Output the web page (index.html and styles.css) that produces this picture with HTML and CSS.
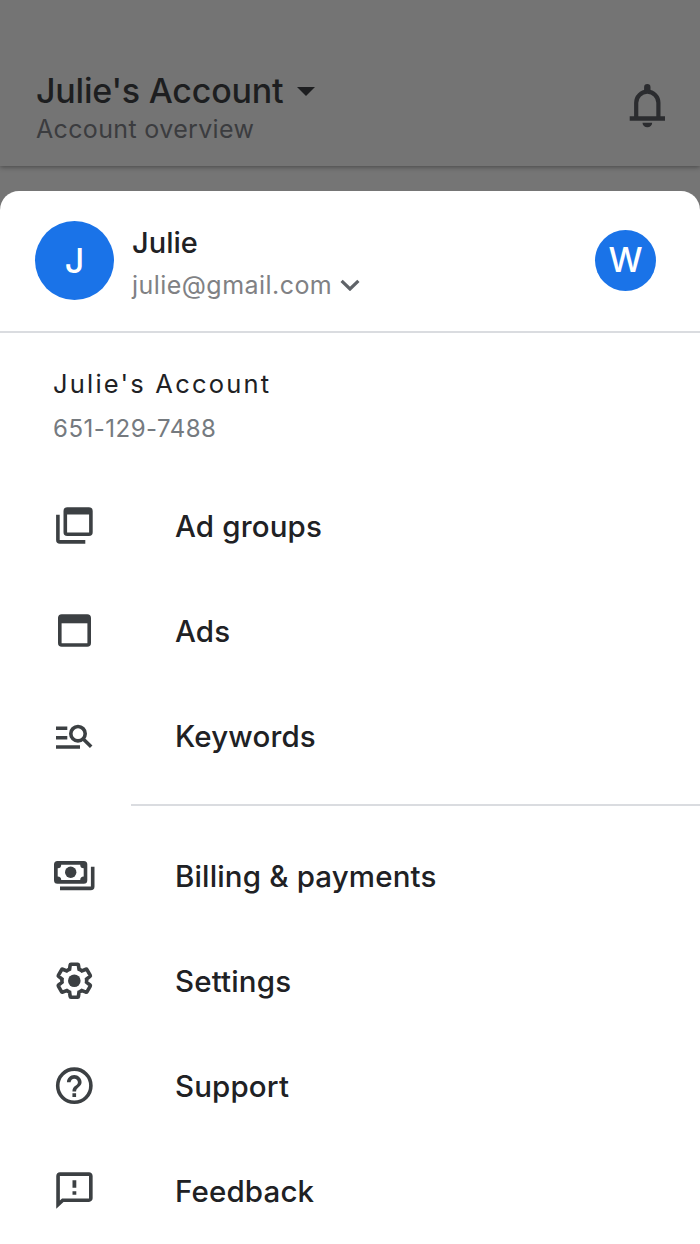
FILE: index.html
```html
<!DOCTYPE html>
<html lang="en">
<head>
    <meta charset="UTF-8">
    <meta name="viewport" content="width=device-width, initial-scale=1.0">
    <title>Julie's Account</title>
    <link rel="stylesheet" href="styles.css">
</head>
<body>
    <header>
        <div>
            <h1>Julie's Account
                <svg class="caret" viewBox="0 0 18 9"><path d="M0 0h18L9 9z"/></svg>
            </h1>
            <p class="subtitle">Account overview</p>
        </div>
        <svg class="bell" viewBox="0 0 48 48">
            <path d="M13.2 36V20.8a11.1 11.1 0 0 1 22.2 0V36" fill="none" stroke="currentColor" stroke-width="4.2"/>
            <path d="M21.1 10V5.2a3.2 3.2 0 0 1 6.4 0V10zM6.7 34.3H42v4.4H6.7zM19.5 40.7h9.7a4.85 4.6 0 0 1-9.7 0z"/>
        </svg>
    </header>

    <main class="sheet">
        <section class="profile">
            <div class="avatar">J</div>
            <div class="user">
                <h2>Julie</h2>
                <p class="email"><span>julie@gmail.com</span>
                    <svg class="chevron" viewBox="0 0 20 12"><path d="M1.6 1.8 10 10l8.4-8.2"/></svg>
                </p>
            </div>
            <div class="avatar small">W</div>
        </section>

        <section class="account">
            <h3>Julie's Account</h3>
            <p>651-129-7488</p>
        </section>

        <nav>
            <a class="item">
                <svg viewBox="0 0 48 48">
                    <path class="line" d="M7.9 12.7v25.2q0 2 2 2h25.4"/>
                    <rect class="line" x="15.3" y="7.1" width="25.6" height="25.2" rx="2"/>
                    <path d="M15 7h26v5.5H15z"/>
                </svg>
                <span>Ad groups</span>
            </a>
            <a class="item">
                <svg viewBox="0 0 48 48">
                    <rect class="line" x="9.8" y="9.1" width="29.4" height="28.9" rx="2"/>
                    <path d="M9 9h31v7.3H9z"/>
                </svg>
                <span>Ads</span>
            </a>
            <a class="item">
                <svg viewBox="0 0 48 48">
                    <path class="line" d="M6 16.3h11.3M6 25.7h11.3M6 35h24M33 26.7l8.2 8"/>
                    <circle class="line" cx="28" cy="21.7" r="7.2"/>
                </svg>
                <span>Keywords</span>
            </a>
        </nav>

        <nav class="more">
            <a class="item">
                <svg viewBox="0 0 48 48">
                    <path fill-rule="evenodd" d="M7.5 9h26.3q3.5 0 3.5 3.5v15.7q0 3.5-3.5 3.5H7.5q-3.5 0-3.5-3.5V12.5Q4 9 7.5 9zM11.2 12.7a3.5 3.5 0 0 1-3.5 3.5v8.3a3.5 3.5 0 0 1 3.5 3.5h19a3.5 3.5 0 0 1 3.5-3.5v-8.3a3.5 3.5 0 0 1-3.5-3.5z"/>
                    <circle cx="20.7" cy="20.3" r="5.7"/>
                    <path class="line" d="M42.7 14.7v19.7q0 2-2 2H10"/>
                </svg>
                <span>Billing &amp; payments</span>
            </a>
            <a class="item">
                <svg viewBox="0 0 48 48">
                    <path class="line gear" d="M19.43 12.98c.04-.32.07-.64.07-.98 0-.34-.03-.66-.07-.98l2.11-1.65c.19-.15.24-.42.12-.64l-2-3.46c-.09-.16-.26-.25-.44-.25-.06 0-.12.01-.17.03l-2.49 1c-.52-.4-1.08-.73-1.69-.98l-.38-2.65C14.46 2.18 14.25 2 14 2h-4c-.25 0-.46.18-.49.42l-.38 2.65c-.61.25-1.17.59-1.69.98l-2.49-1c-.06-.02-.12-.03-.18-.03-.17 0-.34.09-.43.25l-2 3.46c-.13.22-.07.49.12.64l2.11 1.65c-.04.32-.07.65-.07.98 0 .33.03.66.07.98l-2.11 1.65c-.19.15-.24.42-.12.64l2 3.46c.09.16.26.25.44.25.06 0 .12-.01.17-.03l2.49-1c.52.4 1.08.73 1.69.98l.38 2.65c.03.24.24.42.49.42h4c.25 0 .46-.18.49-.42l.38-2.65c.61-.25 1.17-.59 1.69-.98l2.49 1c.06.02.12.03.18.03.17 0 .34-.09.43-.25l2-3.46c.12-.22.07-.49-.12-.64z" transform="translate(4.5 3.9) scale(1.65)"/>
                    <circle cx="24.3" cy="23.7" r="6.3"/>
                </svg>
                <span>Settings</span>
            </a>
            <a class="item">
                <svg viewBox="0 0 48 48">
                    <circle class="line" cx="24.3" cy="23.7" r="16.6"/>
                    <path d="M12 6c-2.21 0-4 1.79-4 4h2c0-1.1.9-2 2-2s2 .9 2 2c0 2-3 1.75-3 5h2c0-2.25 3-2.5 3-5 0-2.21-1.79-4-4-4zM11 16h2v2h-2z" transform="translate(2.3 2) scale(1.83)"/>
                </svg>
                <span>Support</span>
            </a>
            <a class="item">
                <svg viewBox="0 0 48 48">
                    <path d="M20 2H4c-1.1 0-1.99.9-1.99 2L2 22l4-3.7h14c1.1 0 2-.9 2-2V4c0-1.1-.9-2-2-2zm0 14.4H5.17L4 17.5V4h16z" transform="translate(2.6 1.6) scale(1.82)"/>
                    <path d="M22.5 13.3h3.8v7.5h-3.8zM22.5 24.2h3.8v3.6h-3.8z"/>
                </svg>
                <span>Feedback</span>
            </a>
        </nav>
    </main>
</body>
</html>
```

FILE: styles.css
```css
* {
    box-sizing: border-box;
}
body {
    font-family: 'Inter', 'Liberation Sans', sans-serif;
    margin: 0;
    height: 1244px;
    overflow: hidden;
    background: #757575;
    color: #202124;
}
h1, h2, h3, p {
    margin: 0;
}
svg {
    display: block;
    flex: none;
    fill: currentColor;
}
header {
    display: flex;
    justify-content: space-between;
    height: 166px;
    padding: 70px 29px 0 36px;
    background: #747474;
    color: #1d1e20;
    box-shadow: 0 1px 5px rgba(0, 0, 0, 0.4);
}
header h1 {
    display: flex;
    align-items: center;
    gap: 14px;
    font-size: 34px;
    line-height: 42px;
    font-weight: 500;
    letter-spacing: -0.22px;
}
.caret {
    width: 18px;
    height: 9px;
}
.subtitle {
    font-size: 25px;
    line-height: 34px;
    letter-spacing: 0.35px;
    color: #3b3c3f;
}
.bell {
    width: 48px;
    height: 48px;
    margin-top: 12px;
    color: #2b2c2f;
}
.sheet {
    height: 1060px;
    margin-top: 24.5px;
    background: #fff;
    border-radius: 19px 19px 0 0;
}
.profile {
    display: flex;
    align-items: center;
    height: 142.5px;
    padding: 0 44px 0 35px;
    border-bottom: 2px solid #dadce0;
}
.avatar {
    width: 79px;
    height: 79px;
    border-radius: 50%;
    background: #1a73e8;
    color: #fff;
    font-size: 34px;
    font-weight: 500;
    line-height: 79px;
    text-align: center;
}
.avatar.small {
    width: 61px;
    height: 61px;
    line-height: 60px;
}
.user {
    flex: 1;
    padding: 9px 0 0 18px;
}
.user h2 {
    font-size: 29px;
    line-height: 40px;
    font-weight: 500;
}
.email {
    display: flex;
    align-items: center;
    gap: 8px;
    font-size: 25px;
    line-height: 45px;
    letter-spacing: 0.45px;
    color: #808184;
}
.chevron {
    width: 20px;
    height: 12px;
    fill: none;
    stroke: #5f6368;
    stroke-width: 3.2;
}
.account {
    height: 140px;
    padding: 31px 53px 0;
}
.account h3 {
    font-size: 25.5px;
    line-height: 40px;
    font-weight: 400;
    letter-spacing: 2.2px;
}
.account p {
    font-size: 24px;
    line-height: 50px;
    letter-spacing: 0.5px;
    color: #757a7f;
}
.item {
    display: flex;
    align-items: center;
    gap: 77px;
    height: 105px;
    padding-left: 50px;
    font-size: 29.5px;
    font-weight: 470;
    letter-spacing: 0.15px;
}
.item svg {
    width: 48px;
    height: 48px;
    color: #3c4043;
}
.line {
    fill: none;
    stroke: currentColor;
    stroke-width: 3.6;
}
.gear {
    stroke-width: 2.2;
}
.more {
    position: relative;
    margin-top: 16px;
    padding-top: 19px;
}
.more::before {
    content: '';
    position: absolute;
    top: 0;
    left: 131px;
    right: 0;
    height: 2px;
    background: #dadce0;
}
```
